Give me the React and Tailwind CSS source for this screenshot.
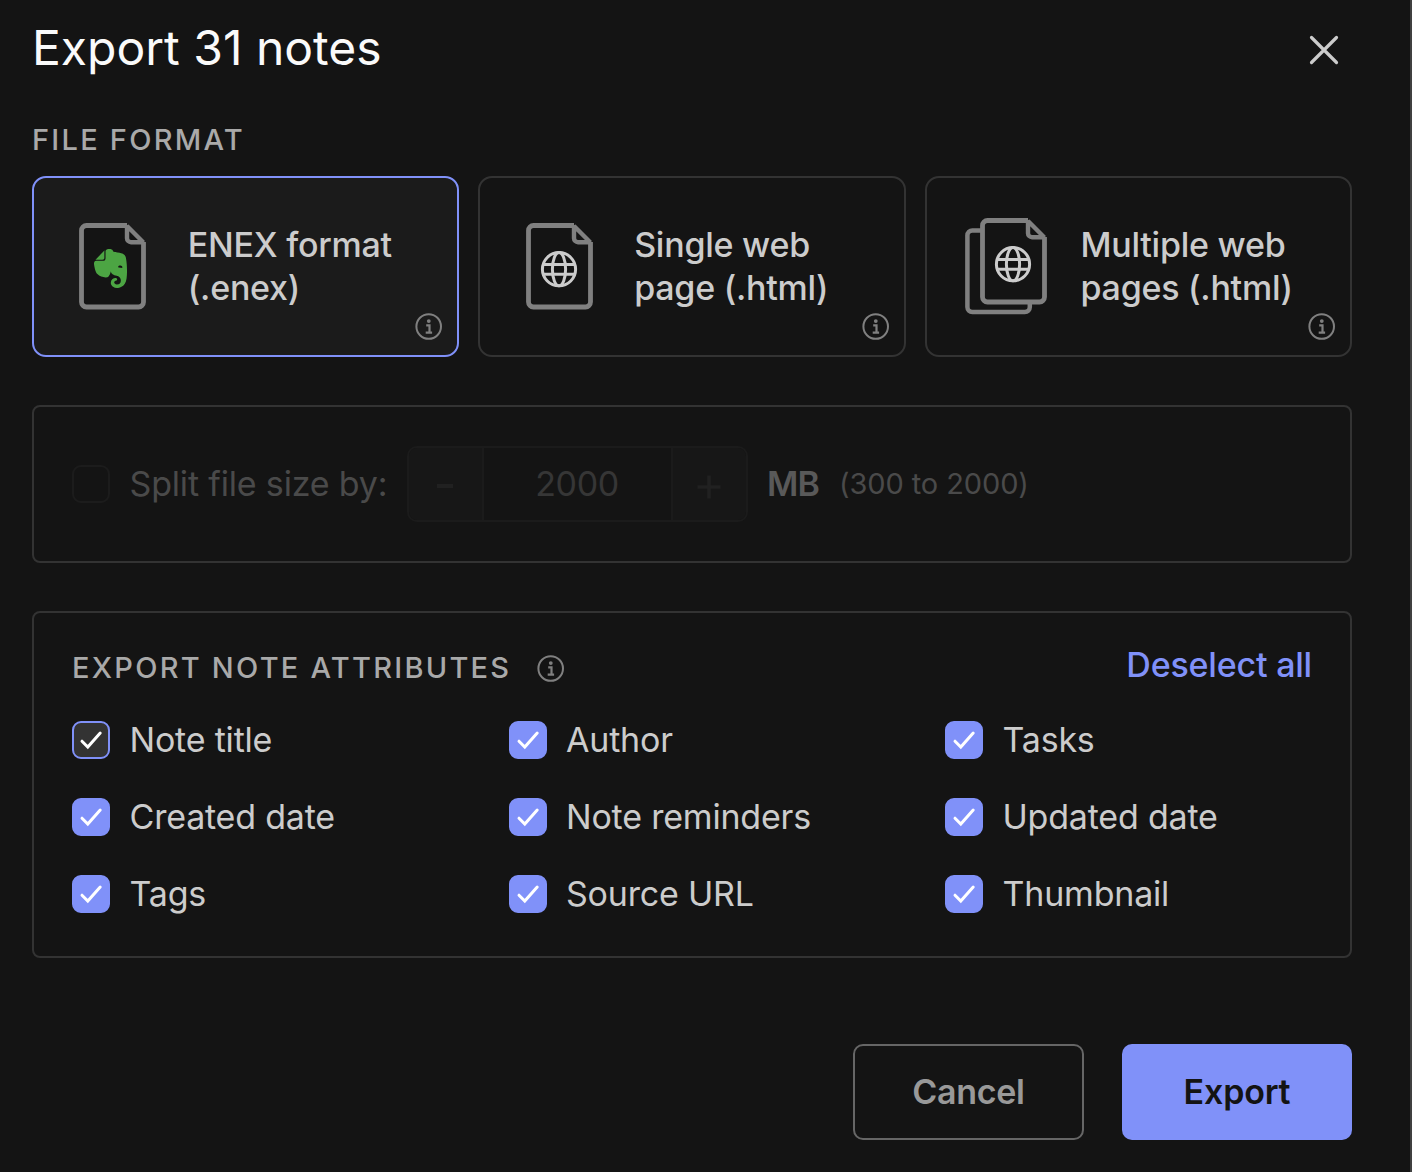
import { SiEvernote } from "react-icons/si";

function InfoIcon({ className }) {
  return (
    <svg viewBox="0 0 28 28" className={className} fill="none">
      <circle cx="13.7" cy="13.5" r="12.3" stroke="#808080" strokeWidth="2" />
      <circle cx="13.8" cy="8.1" r="1.9" fill="#808080" />
      <path d="M11.2 12.4h3.3v7.2M10.7 19.7h6.4" stroke="#808080" strokeWidth="2.2" />
    </svg>
  );
}

function Page() {
  return (
    <g>
      <path
        d="M48 2.5H7.5a5 5 0 0 0-5 5V79a5 5 0 0 0 5 5H59.5a5 5 0 0 0 5-5V19.5L48 2.5Z"
        fill="#141414"
      />
      <path
        d="M48 2.5H7.5a5 5 0 0 0-5 5V79a5 5 0 0 0 5 5H59.5a5 5 0 0 0 5-5V19"
        stroke="#808080"
        strokeWidth="4.8"
      />
      <path
        d="M48 3v12.2a4 4 0 0 0 4 4H64.2L48 3Z"
        stroke="#808080"
        strokeWidth="4.4"
        strokeLinejoin="bevel"
      />
    </g>
  );
}

function Globe() {
  return (
    <g stroke="#cccccc" strokeWidth="3">
      <circle cx="33" cy="46.2" r="16.6" />
      <ellipse cx="33" cy="46.2" rx="6.6" ry="16.6" />
      <path d="M17.5 41.5h31M17.5 51.3h31" />
    </g>
  );
}

function EnexIcon() {
  return (
    <div className="relative h-[87px] w-[68px]">
      <svg viewBox="0 0 68 87" className="h-full w-full" fill="none">
        <Page />
      </svg>
      <SiEvernote className="absolute left-[12px] top-[26px] h-[39px] w-[39px] text-[#4ca543]" />
    </div>
  );
}

function WebPageIcon() {
  return (
    <svg viewBox="0 0 68 87" className="h-[87px] w-[68px]" fill="none">
      <Page />
      <Globe />
    </svg>
  );
}

function WebPagesIcon() {
  return (
    <svg viewBox="0 0 84 97" className="h-[97px] w-[84px]" fill="none">
      <rect x="2.4" y="12.5" width="62.4" height="81.6" rx="5" stroke="#808080" strokeWidth="4.5" />
      <g transform="translate(15 0)">
        <Page />
        <Globe />
      </g>
    </svg>
  );
}

function FormatCard({ icon, lines, selected, pad }) {
  return (
    <div
      className={`relative flex h-[181px] items-center rounded-[14px] border-2 ${pad} ${
        selected ? "border-[#8091f9] bg-[#1b1b1b]" : "border-[#333333]"
      }`}
    >
      {icon}
      <div className="ml-auto w-[269.5px] pb-px text-[34px] font-medium leading-[43px] tracking-[-0.25px] text-[#cccccc]">
        {lines.map((l) => (
          <div key={l} className="whitespace-nowrap">{l}</div>
        ))}
      </div>
      <InfoIcon className="absolute bottom-[14px] right-[14px] h-7 w-7" />
    </div>
  );
}

function Attribute({ label, focused }) {
  return (
    <div className="flex h-[38px] items-center gap-[19.5px]">
      <span
        className={`flex h-[38px] w-[38px] items-center justify-center rounded-[9px] border-2 border-[#8091f9] ${
          focused ? "bg-[#333333]" : "bg-[#8091f9]"
        }`}
      >
        <svg viewBox="0 0 34 34" className="h-[34px] w-[34px]" fill="none">
          <path
            d="M8 18.2 13.8 24 26.2 10"
            stroke="#fff"
            strokeWidth="3"
            strokeLinecap="round"
          />
        </svg>
      </span>
      <span className="pb-px text-[34px] tracking-[-0.2px] text-[#cccccc]">{label}</span>
    </div>
  );
}

const attributes = [
  "Note title", "Author", "Tasks",
  "Created date", "Note reminders", "Updated date",
  "Tags", "Source URL", "Thumbnail",
];

export default function App() {
  return (
    <div className="h-[1172px] w-[1412px] border-r-2 border-[#404040] bg-[#141414] pl-8 pr-[58px] font-['Inter',sans-serif]">
      <header className="flex h-[100px] items-center justify-between pr-[13px]">
        <h1 className="pb-1 text-5xl leading-[58px] text-[#fafafa]">Export 31 notes</h1>
        <svg viewBox="0 0 30 30" className="h-[30px] w-[30px]" fill="none">
          <path d="M2.5 2.5l25 25M27.5 2.5l-25 25" stroke="#cccccc" strokeWidth="3.2" strokeLinecap="round" />
        </svg>
      </header>

      <h2 className="mt-[22px] text-[29px] font-medium leading-9 tracking-[2.25px] text-[#a9a9a9]">FILE FORMAT</h2>
      <div className="mt-[18px] grid grid-cols-3 gap-[19px]">
        <FormatCard selected pad="pl-[45px]" icon={<EnexIcon />} lines={["ENEX format", "(.enex)"]} />
        <FormatCard pad="pl-[46px]" icon={<WebPageIcon />} lines={["Single web", "page (.html)"]} />
        <FormatCard pad="pl-[38px]" icon={<WebPagesIcon />} lines={["Multiple web", "pages (.html)"]} />
      </div>

      <section className="mt-12 flex h-[158px] items-center rounded-lg border-2 border-[#333333] pl-[38px]">
        <span className="h-[38px] w-[38px] rounded-[9px] border-2 border-[#1c1c1c]" />
        <span className="ml-[19.5px] w-[277.5px] whitespace-nowrap pb-px text-[34px] tracking-[-0.17px] text-[#4a4a4a]">Split file size by:</span>
        <div className="flex h-[76px] w-[341px] overflow-hidden rounded-[10px] border-2 border-[#1b1b1b] text-[#212121]">
          <span className="flex w-[75px] items-center justify-center border-r-2 border-[#1b1b1b] bg-[#171717] pr-px">
            <span className="mt-1 h-1 w-4 bg-[#212121]" />
          </span>
          <span className="flex flex-1 items-center justify-center pb-px pr-px text-[34px] tracking-[-0.4px] text-[#363636]">2000</span>
          <span className="flex w-[75px] items-center justify-center border-l-2 border-[#1b1b1b] bg-[#171717] pr-0.5">
            <svg viewBox="0 0 24 24" className="mt-1.5 h-6 w-6" fill="none">
              <path d="M12 .5v23M.5 12h23" stroke="#212121" strokeWidth="3.6" />
            </svg>
          </span>
        </div>
        <span className="ml-[19px] w-[72px] pb-px text-[34px] font-semibold tracking-[-0.8px] text-[#595959]">MB</span>
        <span className="text-[29px] tracking-[-0.1px] text-[#4a4a4a]">(300 to 2000)</span>
      </section>

      <section className="mt-12 h-[347px] rounded-lg border-2 border-[#333333] pl-[38px] pt-[31px]">
        <div className="flex h-[46px] items-center pr-[38px]">
          <h2 className="mt-0.5 text-[29px] font-medium tracking-[2.25px] text-[#a9a9a9]">EXPORT NOTE ATTRIBUTES</h2>
          <InfoIcon className="ml-[26px] mt-1 h-7 w-7" />
          <span className="ml-auto pb-[5px] text-[34px] font-medium tracking-[-0.2px] text-[#8091f9]">Deselect all</span>
        </div>
        <div className="mt-[31px] grid grid-cols-[436.5px_436.5px_1fr] gap-y-[38.8px]">
          {attributes.map((a, i) => (
            <Attribute key={a} label={a} focused={i === 0} />
          ))}
        </div>
      </section>

      <footer className="mt-[86px] flex justify-end gap-[38px]">
        <button className="h-24 w-[231px] rounded-[10px] border-2 border-[#666666] pb-px text-[34px] font-semibold tracking-[-0.3px] text-[#999999]">Cancel</button>
        <button className="h-24 w-[230px] rounded-[10px] bg-[#8091f9] pb-px text-[34px] font-semibold tracking-[-0.2px] text-[#141414]">Export</button>
      </footer>
    </div>
  );
}
